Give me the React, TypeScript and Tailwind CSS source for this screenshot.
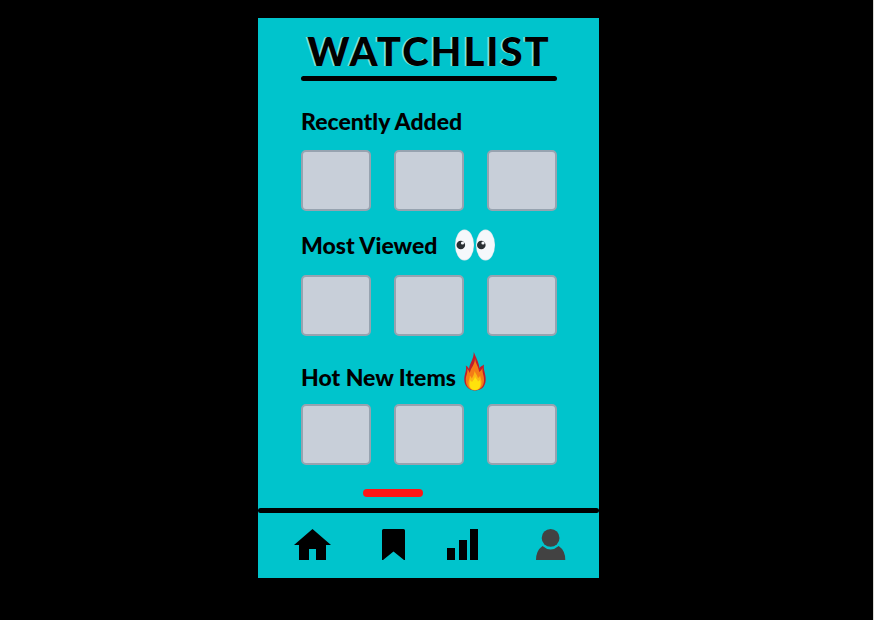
import type { ReactNode } from "react";

function Eyes() {
  return (
    <svg className="h-8 w-10" viewBox="0 0 40 32" aria-label="Eyes" role="img">
      <ellipse cx="9.5" cy="16" rx="9.5" ry="15.5" fill="#d5e3ea" />
      <ellipse cx="9.5" cy="16" rx="9" ry="14.8" fill="#f5f8fb" />
      <ellipse cx="30.5" cy="16" rx="9.5" ry="15.5" fill="#d5e3ea" />
      <ellipse cx="30.5" cy="16" rx="9" ry="14.8" fill="#f5f8fb" />
      <circle cx="5.8" cy="16" r="4.3" fill="#292f33" />
      <circle cx="26.3" cy="16" r="4.3" fill="#292f33" />
      <circle cx="7.5" cy="14" r="1.6" fill="#f5f8fb" />
      <circle cx="28" cy="14" r="1.6" fill="#f5f8fb" />
    </svg>
  );
}

function Fire() {
  return (
    <svg className="h-[39px] w-[22px]" viewBox="0 0 22 39" aria-label="Fire" role="img">
      <path d="M9.8 0C12 6 14.5 9 15.5 16C17 14 18.2 14 20 12.5C19 18 22 22 21.7 28C21.4 35 17 38.5 11 38.5C5 38.5.5 34 .3 28C.1 22 3 19 1.8 13.5C3.5 14.5 4.5 15.5 5 17C6 10 9.5 8 9.8 0Z" fill="#be1e2d" />
      <path d="M11 6C11.5 12 14.5 14 15.2 20C16.5 19 17.5 18 18.5 16C18 21 20.5 24 20 29C19.5 35 16 38.2 11 38.2C5 38.2 1.8 34 1.8 28C1.8 23 4 21 3.2 17C4.5 18 5 19 5.8 21C7 15 11 13 11 6Z" fill="#f47b16" />
      <path d="M10.5 19C12 22 13 23 14 26C15 25.5 15.5 24.5 16.2 23.5C16.2 26 18 28 17.5 31C17 36 14.5 38.2 11 38.2C7 38.2 4.5 35.5 4.5 31C4.5 28 6 27 5.8 23.5C6.8 24.5 7.3 25.5 7.8 26.5C9 24 10.5 22 10.5 19Z" fill="#fbb615" />
      <path d="M11 24C11.5 27 13.5 27 14 29.5C15 29 15.5 28.5 15.8 27.5C18 34 15 38 11 38C6.5 38 4.5 34 6.5 28C7 29 7.5 29.5 8 30C9 28 11 27 11 24Z" fill="#ffe20c" />
    </svg>
  );
}

function Section({ title, icon, heading }: { title: string; icon?: ReactNode; heading: string }) {
  return (
    <section>
      <div className={`flex ${heading}`}>
        <h2 className="text-[23px] leading-7 font-black whitespace-nowrap">{title}</h2>
        {icon}
      </div>
      <div className="flex justify-between">
        {[1, 2, 3].map((n) => (
          <button
            key={n}
            type="button"
            aria-label={`${title} ${n}`}
            className="h-[61px] w-[70px] rounded-[5px] border-2 border-[#97a3b0] bg-[#c8cfd9]"
          />
        ))}
      </div>
    </section>
  );
}

function NavButton({ label, children }: { label: string; children: ReactNode }) {
  return (
    <button type="button" aria-label={label} className="flex justify-center">
      {children}
    </button>
  );
}

export default function App() {
  return (
    <div className="flex min-h-screen items-start justify-center border-r border-[#d9d9d6] bg-black pt-[18px] pr-4 font-['Lato','Open_Sans',sans-serif] text-black">
      <main className="w-full max-w-[341px] bg-[#00c4cc]">
        <div className="pr-[42px] pl-[43px]">
          <header className="pt-2">
            <h1 className="text-center text-[40px] leading-[50px] font-black tracking-wider whitespace-nowrap [text-shadow:-2px_0_0_#7fdfe3]">
              WATCHLIST
            </h1>
            <div className="h-[5px] rounded-full bg-black" />
          </header>
          <Section title="Recently Added" heading="h-[69px] pt-[26px]" />
          <Section title="Most Viewed" heading="h-16 items-center gap-[18px] pt-1" icon={<Eyes />} />
          <Section title="Hot New Items" heading="h-[68px] items-end gap-2 pb-[13px]" icon={<Fire />} />
          <div className="mt-6 mb-[11px] ml-[62px] h-2 w-[60px] rounded-full bg-[#ff1616]" />
        </div>
        <nav>
          <div className="h-[5px] rounded-full bg-black" />
          <div className="grid grid-cols-[108fr_54fr_85fr_91fr] pt-4 pr-[3px] pb-[18px]">
            <NavButton label="Home">
              <svg className="h-[31px] w-[37px]" viewBox="0 0 37 31">
                <path d="M18.5 0L37 16H32V31H22V20H15V31H5V16H0Z" />
              </svg>
            </NavButton>
            <NavButton label="Watchlist">
              <svg className="h-[31px] w-[23px]" viewBox="0 0 23 31">
                <path d="M1.5 0H21.5Q23 0 23 1.5V31H22L11.5 22.5L1 31H0V1.5Q0 0 1.5 0Z" />
              </svg>
            </NavButton>
            <NavButton label="Statistics">
              <svg className="h-[31px] w-[31px]" viewBox="0 0 31 31">
                <path d="M0 19H8V31H0ZM12 11H20V31H12ZM23 0H31V31H23Z" />
              </svg>
            </NavButton>
            <NavButton label="Profile">
              <svg className="h-[31px] w-[30px]" viewBox="0 0 30 31" fill="#424242">
                <circle cx="14.6" cy="8.9" r="8.9" />
                <path d="M6.5 17Q14.6 24 22.7 17Q29.3 21.5 29.3 31H0Q0 21.5 6.5 17Z" />
              </svg>
            </NavButton>
          </div>
        </nav>
      </main>
    </div>
  );
}
